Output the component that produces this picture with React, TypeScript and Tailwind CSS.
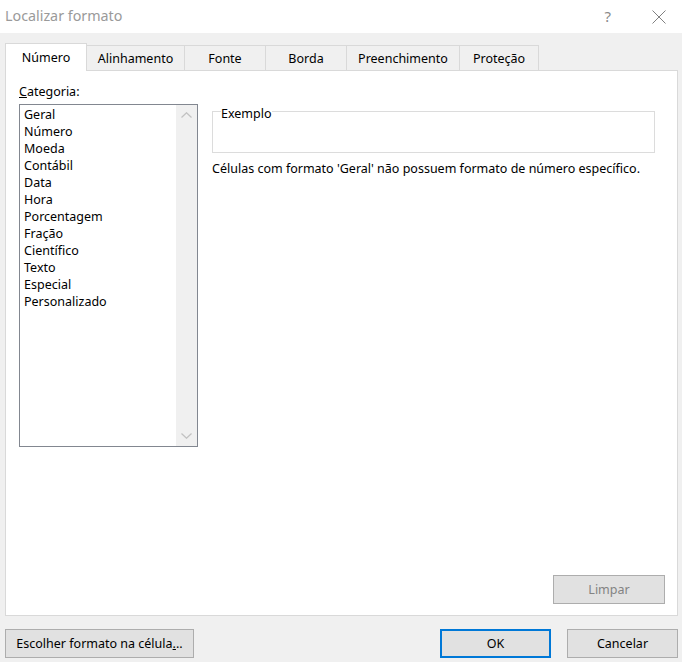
import React from 'react';

const tabs = [
  { label: 'Número', w: 'w-[82px]' },
  { label: 'Alinhamento', w: 'w-[98px]' },
  { label: 'Fonte', w: 'w-[81px]' },
  { label: 'Borda', w: 'w-[81px]' },
  { label: 'Preenchimento', w: 'w-[113px]' },
  { label: 'Proteção', w: 'w-[79px]' },
];

const categorias = [
  'Geral', 'Número', 'Moeda', 'Contábil', 'Data', 'Hora', 'Porcentagem',
  'Fração', 'Científico', 'Texto', 'Especial', 'Personalizado',
];

const font = { fontFamily: '"Noto Sans", "Open Sans", sans-serif' };

export default function App() {
  return (
    <div className="w-[682px] h-[662px] bg-[#f0f0f0] flex flex-col text-[12.5px] text-black" style={font}>
      {/* title bar */}
      <div className="h-[33px] bg-white flex items-center pl-[5px] shrink-0">
        <span className="text-[14.3px] text-[#9a9a9a] leading-none">Localizar formato</span>
        <span className="ml-auto text-[15px] text-[#8a8a8a] leading-none mr-[41px]">?</span>
        <svg width="14" height="14" viewBox="0 0 14 14" className="mr-[16px]" aria-hidden="true">
          <path d="M0.5 0.5 L13.5 13.5 M13.5 0.5 L0.5 13.5" stroke="#808080" strokeWidth="1" fill="none" />
        </svg>
      </div>

      {/* tabs */}
      <div className="flex items-end h-[28px] mt-[9px] pl-[5px] shrink-0">
        {tabs.map((t, i) =>
          i === 0 ? (
            <div key={t.label} className={`${t.w} h-[28px] bg-white border border-b-0 border-[#d9d9d9] flex items-center justify-center relative z-10 -mb-px pt-[2px]`}>
              {t.label}
            </div>
          ) : (
            <div key={t.label} className={`${t.w} h-[25px] border-t border-r border-[#d9d9d9] flex items-center justify-center pt-[2px]`}>
              {t.label}
            </div>
          )
        )}
      </div>

      {/* panel */}
      <div className="ml-[5px] w-[673px] h-[546px] bg-white border border-[#d9d9d9] flex flex-col shrink-0">
        <div className="flex pt-[12px] pl-[13px]">
          <div className="flex flex-col w-[179px]">
            <div className="leading-[17px] mb-[4px]">
              <span className="underline">C</span>ategoria:
            </div>
            <div className="h-[343px] border border-[#828790] flex">
              <div className="flex-1 pl-[4px] pt-[1px] leading-[17px]">
                {categorias.map((c) => (
                  <div key={c}>{c}</div>
                ))}
              </div>
              <div className="w-[21px] bg-[#f0f0f0] flex flex-col items-center justify-between py-[7px]">
                <svg width="11" height="6" viewBox="0 0 11 6" aria-hidden="true">
                  <path d="M0.5 5.5 L5.5 0.8 L10.5 5.5" stroke="#c2c2c2" strokeWidth="1.3" fill="none" />
                </svg>
                <svg width="11" height="6" viewBox="0 0 11 6" aria-hidden="true">
                  <path d="M0.5 0.5 L5.5 5.2 L10.5 0.5" stroke="#c2c2c2" strokeWidth="1.3" fill="none" />
                </svg>
              </div>
            </div>
          </div>

          <div className="ml-[14px] flex flex-col pt-[19px]">
            <fieldset className="w-[443px] h-[51px] border border-[#dcdcdc] px-[8px]">
              <legend className="px-0 pt-[5px] leading-[14px]">Exemplo</legend>
            </fieldset>
            <div className="leading-[17px] mt-[7px]">
              Células com formato 'Geral' não possuem formato de número específico.
            </div>
          </div>
        </div>

        <div className="flex-1" />

        <div className="flex justify-end pr-[12px] pb-[11px]">
          <button className="w-[112px] h-[29px] bg-[#e1e1e1] border border-[#adadad] text-[#838383] pt-[1px]">
            Limpar
          </button>
        </div>
      </div>

      {/* bottom buttons */}
      <div className="flex items-center mt-[13px] pl-[5px] pr-[4px] shrink-0">
        <button className="w-[189px] h-[29px] bg-[#e1e1e1] border border-[#adadad] pt-[1px]">
          Escolher formato na célula<span className="underline">.</span>..
        </button>
        <button className="ml-auto w-[111px] h-[29px] bg-[#e1e1e1] border-2 border-[#0078d7] pt-[1px]">
          OK
        </button>
        <button className="ml-[16px] w-[111px] h-[29px] bg-[#e1e1e1] border border-[#adadad] pt-[1px]">
          Cancelar
        </button>
      </div>
    </div>
  );
}
